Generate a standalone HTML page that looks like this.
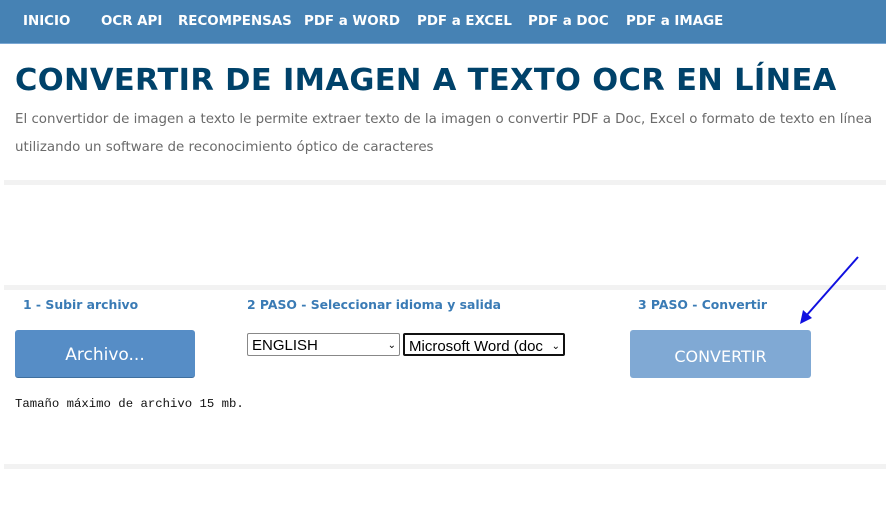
<!DOCTYPE html>
<html><head><meta charset="utf-8"><style>
body{margin:0;width:886px;height:525px;background:#fff;position:relative;overflow:hidden;font-family:"DejaVu Sans",Verdana,sans-serif}
.a{position:absolute;white-space:nowrap}
.nav{left:0;top:0;width:886px;height:43px;background:#4682b4;border-bottom:1px solid #7aa8d4}
.nav span{position:absolute;top:14px;color:#fff;font-weight:bold;font-size:13.4px}
.sep{position:absolute;left:4px;width:882px;height:5px;background:#f2f2f2}
.lbl{color:#3a7bb5;font-weight:bold;font-size:12.4px;top:297px}
.sel{position:absolute;top:333px;height:23px;border:1px solid #888;border-radius:2px;background:#fff;font-family:"Liberation Sans",sans-serif;font-size:15px;line-height:23px;padding-left:4px;box-sizing:border-box;overflow:hidden}
.sel i{position:absolute;right:3px;top:0;font-style:normal;font-size:10px}
</style></head><body>
<div class="a nav">
<span style="left:23px">INICIO</span><span style="left:101px">OCR API</span><span style="left:178px">RECOMPENSAS</span><span style="left:304px">PDF a WORD</span><span style="left:417px">PDF a EXCEL</span><span style="left:528px">PDF a DOC</span><span style="left:626px">PDF a IMAGE</span>
</div>
<div class="a" style="left:15px;top:63px;font-size:30.5px;font-weight:bold;color:#00426a;letter-spacing:0.35px">CONVERTIR DE IMAGEN A TEXTO OCR EN LÍNEA</div>
<div class="a" style="left:15px;top:106px;font-size:13.4px;color:#6a6a6a;line-height:28px;white-space:normal;width:871px">El convertidor de imagen a texto le permite extraer texto de la imagen o convertir PDF a Doc, Excel o formato de texto en línea utilizando un software de reconocimiento óptico de caracteres</div>
<div class="sep" style="top:180px"></div>
<div class="sep" style="top:285px"></div>
<div class="sep" style="top:464px"></div>
<div class="a lbl" style="left:23px">1 - Subir archivo</div>
<div class="a lbl" style="left:247px">2 PASO - Seleccionar idioma y salida</div>
<div class="a lbl" style="left:638px">3 PASO - Convertir</div>
<div class="a" style="left:15px;top:330px;width:180px;height:48px;background:#568dc6;border-radius:3px;border-bottom:1px solid #3f6f9e;color:#fff;font-size:17px;text-align:center;line-height:50px;box-sizing:border-box">Archivo...</div>
<div class="sel" style="left:247px;width:153px">ENGLISH<i>⌄</i></div>
<div class="sel" style="left:403px;width:162px;border:2px solid #111">Microsoft Word (doc<i>⌄</i></div>
<div class="a" style="left:630px;top:330px;width:181px;height:48px;background:#80a9d4;border-radius:3px;color:#fff;font-size:16px;text-align:center;line-height:54px">CONVERTIR</div>
<div class="a" style="left:15px;top:397px;font-family:'Liberation Mono',monospace;font-size:12.3px;color:#111">Tamaño máximo de archivo 15 mb.</div>
<svg class="a" style="left:0;top:0" width="886" height="525"><line x1="858" y1="257" x2="806" y2="316" stroke="#1010e0" stroke-width="2"/><polygon points="800,324 803,310 812,318" fill="#1010e0"/></svg>
</body></html>
